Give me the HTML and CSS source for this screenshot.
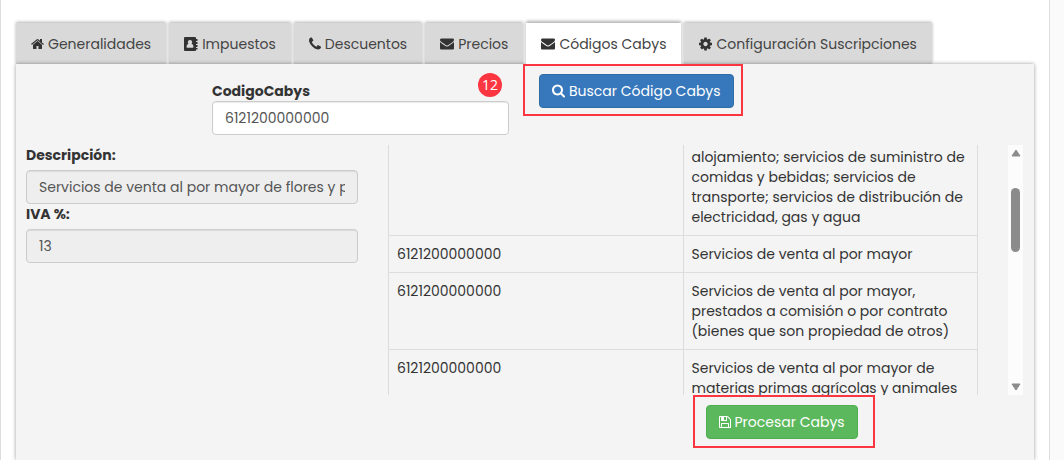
FILE: index.html
```
<!DOCTYPE html>
<html lang="es">

<head>
  <meta charset="UTF-8">
  <meta name="viewport" content="width=device-width, initial-scale=1.0">
  <title>Códigos Cabys</title>
  <link rel="stylesheet" href="styles.css">
</head>

<body>
  <main class="page">
    <nav class="tabs">
      <a class="tab" href="#generalidades">
        <svg class="icon icon-narrow" viewBox="64 128 1664 1536"><path d="M1472 992v480q0 26-19 45t-45 19h-384v-384h-256v384h-384q-26 0-45-19t-19-45v-480q0-1 .5-3t.5-3l575-474 575 474q1 2 1 6zm223-69l-62 74q-8 9-21 11h-3q-13 0-21-7l-692-577-692 577q-12 8-24 7-13-2-21-11l-62-74q-8-10-7-23.500t11-21.500l719-599q32-26 76-26t76 26l244 204v-195q0-14 9-23t23-9h192q14 0 23 9t9 23v408l219 182q10 8 11 21.500t-7 23.500z"/></svg>
        Generalidades
      </a>
      <a class="tab" href="#impuestos">
        <svg class="icon" viewBox="0 0 14 14"><path fill-rule="evenodd" d="M1 0h10q1 0 1 1v1h1.500v2H12v1h1.500v2H12v1h1.500v2H12v1h1.500v1.500H12v.5q0 1-1 1H1q-1 0-1-1V1q0-1 1-1zM6 3a2.200 2.200 0 0 0-1.500 3.800Q2.500 7.200 2.500 10q0 .8.800.8h5.400q.8 0 .8-.8 0-2.800-2-3.200A2.200 2.200 0 0 0 6 3z"/></svg>
        Impuestos
      </a>
      <a class="tab" href="#descuentos">
        <svg class="icon icon-small" viewBox="192 128 1408 1536"><path d="M1600 1240q0 27-10 70.500t-21 68.500q-21 50-122 106-94 51-186 51-27 0-52.500-3.500t-57.500-12.500-47.500-14.500-55.500-20.500-49-18q-98-35-175-83-128-79-264.500-215.500t-215.500-264.500q-48-77-83-175-3-9-18-49t-20.500-55.500-14.500-47.500-12.500-57.500-3.500-52.500q0-92 51-186 56-101 106-122 25-11 68.500-21t70.500-10q14 0 21 3 18 6 53 76 11 19 30 54t35 63.500 31 53.500q3 4 17.500 25t21.500 35.500 7 28.500q0 20-28.500 50t-62 55-62 53-28.500 46q0 9 5 22.500t8.500 20.500 14 24 11.500 19q76 137 174 235t235 174q2 1 19 11.500t24 14 20.500 8.500 22.500 5q18 0 46-28.500t53-62 55-62 50-28.500q14 0 28.500 7t35.500 21.500 25 17.500q25 15 53.500 31t63.500 35 54 30q70 35 76 53 3 7 3 21z"/></svg>
        Descuentos
      </a>
      <a class="tab" href="#precios">
        <svg class="icon" viewBox="0 128 1792 1664"><path d="M1792 710v794q0 66-47 113t-113 47h-1472q-66 0-113-47t-47-113v-794q44 49 101 87 362 246 497 345 57 42 92.500 65.500t94.500 48 110 24.500h2q51 0 110-24.500t94.500-48 92.500-65.500q170-123 498-345 57-39 100-87zm0-294q0 79-49 151t-122 123q-376 261-468 325-10 7-42.500 31t-54 38.500-52 32.500-57.500 27-50 9h-2q-23 0-50-9t-57.500-27-52-32.500-54-38.500-42.500-31q-91-64-262-182.500t-205-142.500q-62-42-117-115.500t-55-136.500q0-78 41.500-130t118.500-52h1472q65 0 112.500 47t47.500 113z"/></svg>
        Precios
      </a>
      <a class="tab active" href="#cabys" aria-current="page">
        <svg class="icon" viewBox="0 128 1792 1664"><path d="M1792 710v794q0 66-47 113t-113 47h-1472q-66 0-113-47t-47-113v-794q44 49 101 87 362 246 497 345 57 42 92.500 65.500t94.500 48 110 24.500h2q51 0 110-24.500t94.500-48 92.500-65.500q170-123 498-345 57-39 100-87zm0-294q0 79-49 151t-122 123q-376 261-468 325-10 7-42.500 31t-54 38.500-52 32.500-57.500 27-50 9h-2q-23 0-50-9t-57.500-27-52-32.500-54-38.500-42.500-31q-91-64-262-182.500t-205-142.500q-62-42-117-115.500t-55-136.500q0-78 41.500-130t118.500-52h1472q65 0 112.500 47t47.500 113z"/></svg>
        Códigos Cabys
      </a>
      <a class="tab" href="#suscripciones">
        <svg class="icon icon-narrow" viewBox="128 128 1536 1536"><path d="M1152 896q0-106-75-181t-181-75-181 75-75 181 75 181 181 75 181-75 75-181zm512-109v222q0 12-8 23t-20 13l-185 28q-19 54-39 91 35 50 107 138 10 12 10 25t-9 23q-27 37-99 108t-94 71q-12 0-26-9l-138-108q-44 23-91 38-16 136-29 186-7 28-36 28h-222q-14 0-24.500-8.500t-11.500-21.500l-28-184q-49-16-90-37l-141 107q-10 9-25 9-14 0-25-11-126-114-165-168-7-10-7-23 0-12 8-23 15-21 51-66.500t54-70.500q-27-50-41-99l-183-27q-13-2-21-12.500t-8-23.500v-222q0-12 8-23t19-13l186-28q14-46 39-92-40-57-107-138-10-12-10-24 0-10 9-23 26-36 98.500-107.500t94.500-71.500q13 0 26 10l138 107q44-23 91-38 16-136 29-186 7-28 36-28h222q14 0 24.500 8.500t11.500 21.500l28 184q49 16 90 37l142-107q9-9 24-9 13 0 25 10 129 119 165 170 7 8 7 22 0 12-8 23-15 21-51 66.500t-54 70.500q26 50 41 98l183 28q13 2 21 12.500t8 23.500z"/></svg>
        Configuración Suscripciones
      </a>
    </nav>

    <section class="panel" id="cabys">
      <div class="search-row">
        <div class="search-field">
          <label for="codigo-cabys">CodigoCabys</label>
          <input class="form-control" id="codigo-cabys" type="text" value="6121200000000">
          <span class="step-badge">12</span>
        </div>
        <div class="marked marked-search">
          <button class="btn btn-primary" type="button">
            <svg class="icon icon-narrow" viewBox="64 128 1664 1664"><path d="M1216 832q0-185-131.500-316.500t-316.500-131.500-316.500 131.500-131.500 316.500 131.500 316.500 316.500 131.500 316.500-131.500 131.500-316.500zm512 832q0 52-38 90t-90 38q-54 0-90-38l-343-342q-179 124-399 124-143 0-273.500-55.500t-225-150-150-225-55.500-273.500 55.500-273.500 150-225 225-150 273.500-55.500 273.500 55.500 225 150 150 225 55.500 273.500q0 220-124 399l343 343q37 37 37 90z"/></svg>
            Buscar Código Cabys
          </button>
        </div>
      </div>

      <div class="columns">
        <div class="details">
          <label for="descripcion">Descripción:</label>
          <input class="form-control" id="descripcion" type="text" value="Servicios de venta al por mayor de flores y plantas" readonly>
          <label for="iva">IVA %:</label>
          <input class="form-control" id="iva" type="text" value="13" readonly>
        </div>

        <div class="results">
          <div class="results-box">
            <div class="results-scroll" id="results-scroll">
              <table class="results-table">
                <tbody>
                  <tr>
                    <td></td>
                    <td>Servicios de venta, servicios de alojamiento; servicios de suministro de comidas y bebidas; servicios de transporte; servicios de distribución de electricidad, gas y agua</td>
                  </tr>
                  <tr>
                    <td>6121200000000</td>
                    <td>Servicios de venta al por mayor</td>
                  </tr>
                  <tr>
                    <td>6121200000000</td>
                    <td>Servicios de venta al por mayor, prestados a comisión o por contrato (bienes que son propiedad de otros)</td>
                  </tr>
                  <tr>
                    <td>6121200000000</td>
                    <td>Servicios de venta al por mayor de materias primas agrícolas y animales</td>
                  </tr>
                </tbody>
              </table>
            </div>
            <div class="scrollbar" aria-hidden="true">
              <svg class="arrow" viewBox="0 0 10 8"><path d="M5 1 9 7H1z"/></svg>
              <div class="track"><div class="thumb"></div></div>
              <svg class="arrow" viewBox="0 0 10 8"><path d="M1 1h8L5 7z"/></svg>
            </div>
          </div>
          <div class="actions">
            <div class="marked marked-process">
              <button class="btn btn-success" type="button">
                <svg class="icon icon-small" viewBox="128 128 1536 1536"><path d="M512 1536h768v-384h-768v384zm896 0h128v-896q0-14-10-38.500t-20-34.500l-281-281q-10-10-34-20t-39-10v416q0 40-28 68t-68 28h-576q-40 0-68-28t-28-68v-416h-128v1280h128v-416q0-40 28-68t68-28h832q40 0 68 28t28 68v416zm-384-928v-320q0-13-9.500-22.500t-22.500-9.500h-192q-13 0-22.500 9.500t-9.500 22.500v320q0 13 9.500 22.500t22.500 9.500h192q13 0 22.500-9.500t9.500-22.500zm640 32v928q0 40-28 68t-68 28h-1344q-40 0-68-28t-28-68v-1344q0-40 28-68t68-28h928q40 0 88 20t76 48l280 280q28 28 48 76t20 88z"/></svg>
                Procesar Cabys
              </button>
            </div>
          </div>
        </div>
      </div>
    </section>
  </main>

  <script>
    document.getElementById('results-scroll').scrollTop = 27;
  </script>
</body>

</html>
```
FILE: styles.css
```
* {
  box-sizing: border-box;
}

body {
  margin: 0;
  padding-right: 14px;
  background-color: #fafafa;
  color: #333;
  font-family: Poppins, Inter, sans-serif;
  font-size: 14px;
  line-height: 20px;
}

.page {
  display: flex;
  flex-direction: column;
  min-height: 100vh;
  padding: 23px 15px 0;
  border: solid #ddd;
  border-width: 0 1px;
  background-color: white;
}

/* Tabs */
.tabs {
  display: flex;
  gap: 3px;
}

.tab {
  display: flex;
  align-items: center;
  gap: 4px;
  height: 41px;
  padding: 0 15px;
  background-color: #d9d9d9;
  box-shadow: 0 -1px 3px rgb(0 0 0 / 30%);
  color: #444;
  text-decoration: none;
  white-space: nowrap;
}

.tab.active {
  position: relative;
  background-color: white;
  box-shadow: 0 -2px 3px rgb(0 0 0 / 30%);
}

.icon {
  flex: none;
  width: 14px;
  height: 14px;
  fill: #333;
}

.icon-narrow {
  width: 13px;
}

.icon-small {
  width: 12px;
}

/* Panel */
.panel {
  flex: 1;
  padding: 10px 11px 10px 10px;
  background-color: #f4f4f4;
  box-shadow: 0 0 4px rgb(0 0 0 / 40%);
}

.search-row {
  display: flex;
  align-items: flex-start;
  gap: 30px;
  margin-bottom: 10px;
  padding-left: 186px;
}

.search-field {
  position: relative;
  flex: 0 0 297px;
  padding-top: 7px;
}

label {
  display: block;
  font-weight: bold;
}

.form-control {
  display: block;
  width: 100%;
  height: 34px;
  padding: 6px 12px;
  border: 1px solid #ccc;
  border-radius: 4px;
  background-color: white;
  box-shadow: inset 0 1px 1px rgb(0 0 0 / 8%);
  color: #555;
  font: inherit;
}

.form-control[readonly] {
  background-color: #eee;
}

.btn {
  display: flex;
  align-items: center;
  gap: 4px;
  height: 34px;
  padding: 0 12px;
  border: 1px solid transparent;
  border-radius: 4px;
  color: white;
  font: inherit;
  white-space: nowrap;
  cursor: pointer;

  .icon {
    fill: white;
  }
}

.btn-primary {
  border-color: #2e6da4;
  background-color: #3777bc;
}

.btn-success {
  border-color: #4cae4c;
  background-color: #5cb85c;
}

/* Red marks of the guide */
.step-badge {
  position: absolute;
  top: -1px;
  right: 7px;
  width: 24px;
  height: 24px;
  border-radius: 50%;
  background-color: #fb3640;
  color: white;
  font-family: "Open Sans", sans-serif;
  line-height: 24px;
  text-align: center;
}

.marked {
  position: relative;
}

.marked::after {
  content: "";
  position: absolute;
  border: 2px solid #fb3640;
  pointer-events: none;
}

.marked-search::after {
  inset: -10px -9px -8px -16px;
}

.marked-process::after {
  inset: -10px -17px -9px -13px;
}

/* Details and results */
.columns {
  display: flex;
  gap: 30px;
}

.details {
  flex: 0 0 33.3%;

  .form-control {
    margin-top: 5px;
  }
}

.results {
  flex: 1;
  min-width: 0;
}

.results-box {
  display: flex;
  gap: 30px;
  height: 250px;
}

.results-scroll {
  flex: 1;
  overflow-y: auto;
  scrollbar-width: none;
}

.results-table {
  width: 100%;
  border-collapse: collapse;
  table-layout: fixed;

  td {
    padding: 8px;
    border: 1px solid #ddd;
    vertical-align: top;
  }

  /* room to scroll past the last row */
  tr:last-child td {
    padding-bottom: 32px;
  }
}

.scrollbar {
  display: flex;
  flex-direction: column;
  align-items: center;
  justify-content: space-between;
  width: 15px;
  padding: 4px 0;
  background-color: #fcfcfc;
}

.arrow {
  width: 10px;
  height: 8px;
  fill: #8b8b8b;
  stroke: #8b8b8b;
  stroke-linejoin: round;
}

.track {
  flex: 1;
  padding-top: 31px;
}

.thumb {
  width: 9px;
  height: 64px;
  border-radius: 5px;
  background-color: #8b8b8b;
}

.actions {
  display: flex;
  margin-top: 10px;
  padding-left: 50%;
}
```
